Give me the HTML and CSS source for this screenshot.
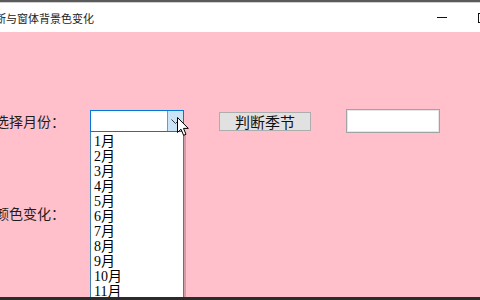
FILE: index.html
```html
<!DOCTYPE html>
<html lang="zh">
<head>
<meta charset="utf-8">
<title>判断季节与窗体背景色变化</title>
<link rel="stylesheet" href="styles.css">
</head>
<body>
<div class="window">
  <div class="frame-top"></div>
  <div class="titlebar">
    <span class="title">断与窗体背景色变化</span>
    <div class="controls">
      <span class="min"></span>
      <span class="max"></span>
    </div>
  </div>
  <div class="client">
    <div class="row row-first">
      <span class="label">选择月份：</span>
      <div class="combo-wrap">
        <div class="combo">
          <div class="combo-field"></div>
          <div class="combo-btn">
            <svg width="9" height="5" viewBox="0 0 9 5"><path d="M0.5 0.5 L4.5 4.5 L8.5 0.5" fill="none" stroke="#3a3a3a" stroke-width="1"/></svg>
          </div>
        </div>
        <ul class="dropdown">
          <li>1月</li><li>2月</li><li>3月</li><li>4月</li><li>5月</li><li>6月</li>
          <li>7月</li><li>8月</li><li>9月</li><li>10月</li><li>11月</li><li>12月</li>
        </ul>
        <svg class="cursor" width="14" height="20" viewBox="0 0 14 20">
          <path d="M0.5 0.5 L0.5 15.5 L4 12.2 L6.6 18.3 L9 17.3 L6.5 11.4 L11.3 11.4 Z" fill="#fff" stroke="#000" stroke-width="1" stroke-linejoin="miter"/>
        </svg>
      </div>
      <button class="btn">判断季节</button>
      <div class="textbox"></div>
    </div>
    <div class="row row-second">
      <span class="label">颜色变化：</span>
    </div>
  </div>
  <div class="frame-bottom"></div>
</div>
</body>
</html>
```

FILE: styles.css
```css
html, body {
  margin: 0;
  padding: 0;
}
body {
  width: 480px;
  height: 300px;
  overflow: hidden;
  font-family: "Noto Sans CJK SC", "Noto Sans", sans-serif;
}
.window {
  width: 480px;
  height: 300px;
  display: flex;
  flex-direction: column;
  overflow: hidden;
}
.frame-top {
  height: 2px;
  background: #5a5a5a;
  border-bottom: 1px solid #d0d0d0;
  flex: none;
}
.titlebar {
  height: 29px;
  flex: none;
  background: #ffffff;
  display: flex;
  align-items: center;
  overflow: hidden;
}
.title {
  margin-left: -5px;
  font-size: 11px;
  line-height: 14px;
  color: #222;
  white-space: nowrap;
  margin-top: 1px;
}
.controls {
  margin-left: auto;
  margin-right: -8px;
  display: flex;
  align-items: center;
  gap: 31px;
}
.min {
  display: block;
  width: 10px;
  height: 1px;
  background: #111;
}
.max {
  display: block;
  width: 8px;
  height: 8px;
  border: 1px solid #111;
}
.client {
  flex: 1;
  background: #ffc0cb;
  overflow: hidden;
  position: relative;
}
.row {
  display: flex;
  align-items: center;
  margin-left: -5px;
}
.row-first {
  margin-top: 77px;
  height: 24px;
}
.row-second {
  margin-top: 70px;
  height: 20px;
}
.label {
  width: 95px;
  flex: none;
  font-size: 14px;
  line-height: 20px;
  color: #1e1e1e;
  white-space: nowrap;
}
.combo-wrap {
  position: relative;
  width: 94px;
  height: 22px;
  flex: none;
  margin-right: 35px;
}
.combo {
  display: flex;
  width: 94px;
  height: 22px;
  box-sizing: border-box;
  border: 1px solid #0078d7;
  background: #fff;
}
.combo-field {
  flex: 1;
}
.combo-btn {
  width: 15px;
  background: #cce4f7;
  border-left: 1px solid #569de5;
  display: flex;
  align-items: center;
  justify-content: center;
}
.dropdown {
  position: absolute;
  left: 0;
  top: 22px;
  width: 94px;
  height: 190px;
  box-sizing: border-box;
  margin: 0;
  padding: 2px 0 0 3px;
  list-style: none;
  background: #fff;
  border: 1px solid #3c7fb1;
  border-top: none;
  box-shadow: 2px 0 0 rgba(0,0,0,0.18);
  font-family: "Liberation Serif", "Noto Sans CJK SC", serif;
  font-size: 14px;
  line-height: 15px;
  color: #000;
}
.dropdown li {
  height: 15px;
  white-space: nowrap;
}
.cursor {
  position: absolute;
  left: 87px;
  top: 7px;
}
.btn {
  width: 92px;
  height: 19px;
  box-sizing: border-box;
  margin: 1px 35px 0 0;
  padding: 0;
  flex: none;
  background: #e1e1e1;
  border: 1px solid #adadad;
  font-family: "Noto Sans CJK SC", sans-serif;
  font-size: 15px;
  line-height: 17px;
  color: #111;
}
.textbox {
  width: 94px;
  height: 24px;
  box-sizing: border-box;
  flex: none;
  background: #fff;
  border: 1px solid #a3a3a3;
  box-shadow: inset 0 0 0 1px #e6e6e6;
}
.frame-bottom {
  height: 3px;
  flex: none;
  background: #2b2b2b;
}
```
